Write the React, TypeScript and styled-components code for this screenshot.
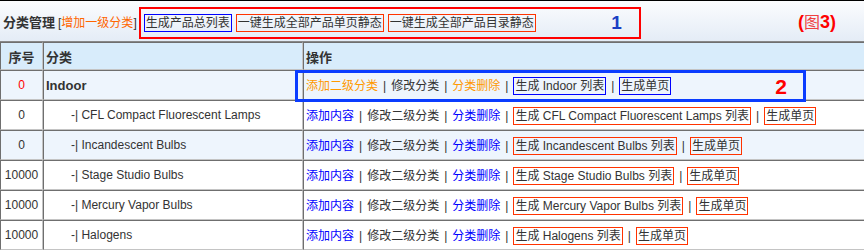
import React from 'react';
import styled, { createGlobalStyle } from 'styled-components';

const GlobalStyle = createGlobalStyle`
  body {
    margin: 0;
    background: #fff;
    font-family: Tahoma, "Liberation Sans", "Noto Sans CJK SC", sans-serif;
    font-size: 12px;
    color: #333;
  }
`;

interface Row {
  sort: string;
  name: string;
  top?: boolean;
  shaded?: boolean;
}

const rows: Row[] = [
  { sort: '0', name: 'Indoor', top: true, shaded: true },
  { sort: '0', name: 'CFL Compact Fluorescent Lamps' },
  { sort: '0', name: 'Incandescent Bulbs', shaded: true },
  { sort: '10000', name: 'Stage Studio Bulbs' },
  { sort: '10000', name: 'Mercury Vapor Bulbs' },
  { sort: '10000', name: 'Halogens' },
];

const App = () => {
  return (
    <>
      <GlobalStyle />
      <Page>
        <TopBar>
          <Title>分类管理</Title>
          <Bracket>
            [<Link tone="deep">增加一级分类</Link>]
          </Bracket>
          <MarkGroup>
            <GenBox tone="blue">生成产品总列表</GenBox>
            <GenBox tone="red">一键生成全部产品单页静态</GenBox>
            <GenBox tone="red">一键生成全部产品目录静态</GenBox>
            <MarkNum>1</MarkNum>
          </MarkGroup>
          <FigLabel>
            (<Thin>图</Thin>3)
          </FigLabel>
        </TopBar>

        <TableWrap>
          <Table>
            <colgroup>
              <col style={{ width: 43 }} />
              <col style={{ width: 260 }} />
              <col />
            </colgroup>
            <thead>
              <tr>
                <Th center>序号</Th>
                <Th>分类</Th>
                <Th>操作</Th>
              </tr>
            </thead>
            <tbody>
              {rows.map((r) => (
                <Tr key={r.name} shaded={r.shaded}>
                  <SortCell red={r.top}>{r.sort}</SortCell>
                  <NameCell top={r.top}>{r.top ? r.name : `-| ${r.name}`}</NameCell>
                  <Td>
                    {r.top ? (
                      <>
                        <Link tone="orange">添加二级分类</Link>
                        <Sep>|</Sep>
                        <Link>修改分类</Link>
                        <Sep>|</Sep>
                        <Link tone="orange">分类删除</Link>
                        <Sep>|</Sep>
                        <GenBox tone="blue">生成 {r.name} 列表</GenBox>
                        <Sep>|</Sep>
                        <GenBox tone="blue">生成单页</GenBox>
                      </>
                    ) : (
                      <>
                        <Link tone="blue">添加内容</Link>
                        <Sep>|</Sep>
                        <Link>修改二级分类</Link>
                        <Sep>|</Sep>
                        <Link tone="blue">分类删除</Link>
                        <Sep>|</Sep>
                        <GenBox tone="red">生成 {r.name} 列表</GenBox>
                        <Sep>|</Sep>
                        <GenBox tone="red">生成单页</GenBox>
                      </>
                    )}
                  </Td>
                </Tr>
              ))}
            </tbody>
          </Table>
          <MarkBox>
            <MarkTwo>2</MarkTwo>
          </MarkBox>
        </TableWrap>
      </Page>
    </>
  );
};

const toneColor = {
  orange: '#ff9900',
  deep: '#ff6600',
  blue: '#0000ff',
  red: '#ff3300',
  plain: '#333',
};

const Page = styled.div`
  width: 864px;
  height: 251px;
  overflow: hidden;
`;

const TopBar = styled.div`
  display: flex;
  align-items: center;
  height: 41px;
  padding-left: 3px;
  border-top: 1px solid #000;
  box-sizing: border-box;
  background: linear-gradient(#fbfcfe, #e4ecf6);
`;

const Title = styled.span`
  font-weight: bold;
  font-size: 13px;
  color: #333;
`;

const Bracket = styled.span`
  margin-left: 3px;
  font-size: 12px;
  color: #333;
`;

const Link = styled.span<{ tone?: 'orange' | 'deep' | 'blue' }>`
  color: ${(p) => toneColor[p.tone ?? 'plain']};
  cursor: pointer;
`;

const MarkGroup = styled.div`
  display: flex;
  align-items: center;
  gap: 4px;
  width: 495px;
  height: 28px;
  margin-left: 2px;
  margin-top: 3px;
  padding-left: 3px;
  border: 2px solid #ff0000;
`;

const GenBox = styled.span<{ tone: 'blue' | 'red' }>`
  display: inline-block;
  padding: 0 1px;
  line-height: 16px;
  color: #333;
  border: 1px solid ${(p) => toneColor[p.tone]};
`;

const MarkNum = styled.span`
  margin-left: auto;
  margin-right: 17px;
  font: bold 19px "Liberation Sans", sans-serif;
  color: #1a3fc4;
`;

const FigLabel = styled.span`
  margin-left: auto;
  margin-right: 28px;
  font: bold 18px "Liberation Sans", "Noto Sans CJK SC", sans-serif;
  color: #ff0000;
`;

const Thin = styled.span`
  font-weight: normal;
  font-size: 16px;
  color: #f04040;
`;

const TableWrap = styled.div`
  position: relative;
`;

const Table = styled.table`
  width: 866px;
  table-layout: fixed;
  border-collapse: separate;
  border-spacing: 0;
  border-top: 1px solid #888;
`;

const cellBorder = `
  border-left: 1px solid #6f6f6f;
  border-top: 1px solid #6f6f6f;
  border-right: 1px solid #c4c4c4;
  border-bottom: 1px solid #c4c4c4;
`;

const Th = styled.th<{ center?: boolean }>`
  ${cellBorder}
  height: 26px;
  padding: 0 2px;
  background: #d8ecfb;
  font-size: 13px;
  font-weight: bold;
  color: #333;
  text-align: ${(p) => (p.center ? 'center' : 'left')};
`;

const Tr = styled.tr<{ shaded?: boolean }>`
  background: ${(p) => (p.shaded ? '#eef5fd' : '#fff')};
`;

const Td = styled.td`
  ${cellBorder}
  height: 28px;
  padding: 0 2px;
  white-space: nowrap;
  vertical-align: middle;
`;

const SortCell = styled(Td)<{ red?: boolean }>`
  text-align: center;
  padding: 0;
  color: ${(p) => (p.red ? '#ff0000' : '#333')};
`;

const NameCell = styled(Td)<{ top?: boolean }>`
  font-weight: ${(p) => (p.top ? 'bold' : 'normal')};
  font-size: ${(p) => (p.top ? '13px' : '12px')};
  padding-left: ${(p) => (p.top ? '2px' : '27px')};
`;

const Sep = styled.span`
  margin: 0 5px;
  color: #333;
`;

const MarkBox = styled.div`
  position: absolute;
  left: 295px;
  top: 29px;
  width: 505px;
  height: 26px;
  border: 3px solid #0a3cff;
`;

const MarkTwo = styled.span`
  position: absolute;
  right: 16px;
  top: 2px;
  font: bold 21px "Liberation Sans", sans-serif;
  color: #ff0000;
`;

export default App;
